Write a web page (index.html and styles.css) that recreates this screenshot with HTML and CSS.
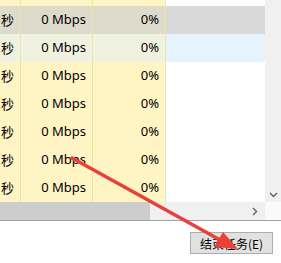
FILE: index.html
```html
<!DOCTYPE html>
<html lang="zh-CN">
<head>
    <meta charset="UTF-8" />
    <title>任务管理器</title>
    <link rel="stylesheet" href="styles.css">
</head>
<body>
    <div class="window">
        <div class="list-area">
            <div class="list">
                <div class="rows">
                    <div class="row">
                        <div class="cell heat"></div>
                        <div class="cell heat"></div>
                        <div class="cell heat"></div>
                        <div class="cell plain"></div>
                    </div>
                    <div class="row selected">
                        <div class="cell heat">秒</div>
                        <div class="cell heat">0 Mbps</div>
                        <div class="cell heat">0%</div>
                        <div class="cell plain"></div>
                    </div>
                    <div class="row hover">
                        <div class="cell heat">秒</div>
                        <div class="cell heat">0 Mbps</div>
                        <div class="cell heat">0%</div>
                        <div class="cell plain"></div>
                    </div>
                    <div class="row">
                        <div class="cell heat">秒</div>
                        <div class="cell heat">0 Mbps</div>
                        <div class="cell heat">0%</div>
                        <div class="cell plain"></div>
                    </div>
                    <div class="row">
                        <div class="cell heat">秒</div>
                        <div class="cell heat">0 Mbps</div>
                        <div class="cell heat">0%</div>
                        <div class="cell plain"></div>
                    </div>
                    <div class="row">
                        <div class="cell heat">秒</div>
                        <div class="cell heat">0 Mbps</div>
                        <div class="cell heat">0%</div>
                        <div class="cell plain"></div>
                    </div>
                    <div class="row">
                        <div class="cell heat">秒</div>
                        <div class="cell heat">0 Mbps</div>
                        <div class="cell heat">0%</div>
                        <div class="cell plain"></div>
                    </div>
                    <div class="row">
                        <div class="cell heat">秒</div>
                        <div class="cell heat">0 Mbps</div>
                        <div class="cell heat">0%</div>
                        <div class="cell plain"></div>
                    </div>
                </div>
                <div class="vscroll">
                    <svg class="arrow-down" width="9" height="6" viewBox="0 0 9 6">
                        <path d="M1 1 L4.5 4.5 L8 1" fill="none" stroke="#606060" stroke-width="1.4"/>
                    </svg>
                </div>
            </div>
            <div class="hscroll">
                <div class="track">
                    <div class="thumb"></div>
                    <svg class="arrow-right" width="6" height="9" viewBox="0 0 6 9">
                        <path d="M1 1 L4.5 4.5 L1 8" fill="none" stroke="#606060" stroke-width="1.4"/>
                    </svg>
                </div>
                <div class="corner"></div>
            </div>
        </div>

        <div class="footer">
            <button class="end-task">结束任务(E)</button>
        </div>

        <!-- red annotation arrow drawn over the screenshot -->
        <svg class="annotation" width="281" height="263" viewBox="0 0 281 263">
            <line x1="72" y1="158" x2="222" y2="241" stroke="#e8413a" stroke-width="3.5" stroke-linecap="round"/>
            <polygon points="238,249 214,247 223,232" fill="#e8413a"/>
        </svg>
    </div>
</body>
</html>
```

FILE: styles.css
```css
* {
    margin: 0;
    padding: 0;
    box-sizing: border-box;
}

body {
    font-family: "Noto Sans", "Noto Sans CJK SC", sans-serif;
    font-size: 13px;
    color: #000;
    background: #fff;
    width: 281px;
    height: 263px;
    overflow: hidden;
}

.window {
    position: relative;
    width: 281px;
    height: 263px;
    display: flex;
    flex-direction: column;
}

.list-area {
    display: flex;
    flex-direction: column;
    height: 221px;
    border-bottom: 1px solid #a0a0a0;
}

.list {
    display: flex;
    height: 202px;
    overflow: hidden;
}

.rows {
    width: 265px;
    margin-top: -22px;
    display: flex;
    flex-direction: column;
}

.row {
    display: grid;
    grid-template-columns: 21px 72px 73px 99px;
    height: 28px;
    flex-shrink: 0;
}

.cell {
    display: flex;
    align-items: center;
    justify-content: flex-end;
    padding-right: 6px;
    padding-bottom: 2px;
    white-space: nowrap;
    overflow: hidden;
}

.cell.heat {
    background: #fff4c4;
    border-right: 1px solid #efe3ad;
}

.cell.plain {
    background: #fff;
}

.row.selected .heat { background: #dedbcd; }
.row.selected .plain { background: #d9d9d9; }
.row.hover .heat { background: #f0f2e0; }
.row.hover .plain { background: #e5f3ff; }

.vscroll {
    width: 16px;
    background: #f0f0f0;
    display: flex;
    flex-direction: column;
    justify-content: flex-end;
    align-items: center;
    padding-bottom: 4px;
}

.hscroll {
    display: flex;
    height: 18px;
}

.track {
    width: 265px;
    background: #f0f0f0;
    display: flex;
    align-items: center;
    justify-content: space-between;
    padding-right: 7px;
}

.thumb {
    width: 150px;
    height: 18px;
    background: #cdcdcd;
}

.corner {
    width: 16px;
    background: #fafafa;
}

.footer {
    flex: 1;
    display: flex;
    justify-content: flex-end;
    align-items: flex-start;
    padding: 11px 8px 0 0;
    background: #fff;
}

.end-task {
    font-family: "Noto Sans CJK SC", sans-serif;
    font-size: 12px;
    width: 83px;
    height: 22px;
    background: #e1e1e1;
    border: 1px solid #adadad;
    color: #000;
}

.annotation {
    position: absolute;
    left: 0;
    top: 0;
    pointer-events: none;
}
```
